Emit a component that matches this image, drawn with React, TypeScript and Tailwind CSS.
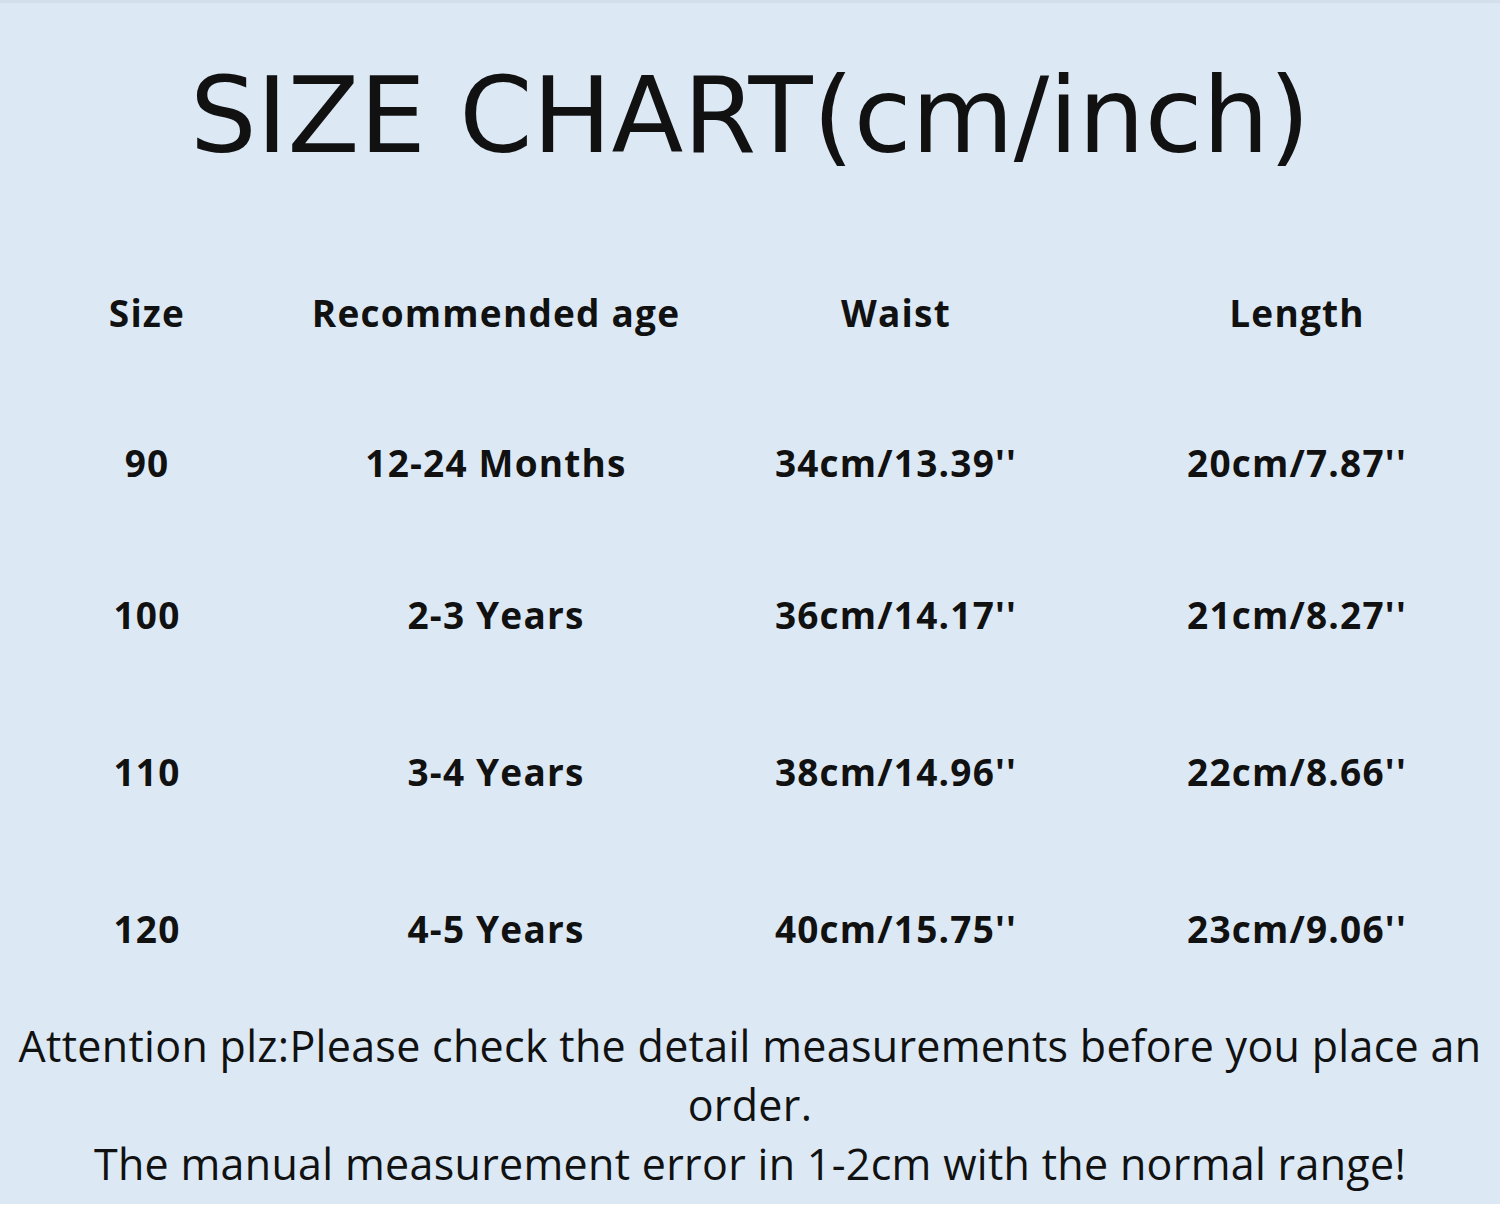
import React from "react";

const rows = [
  ["90", "12-24 Months", "34cm/13.39''", "20cm/7.87''"],
  ["100", "2-3 Years", "36cm/14.17''", "21cm/8.27''"],
  ["110", "3-4 Years", "38cm/14.96''", "22cm/8.66''"],
  ["120", "4-5 Years", "40cm/15.75''", "23cm/9.06''"],
];

const heights = ["h-[150px]", "h-[154px]", "h-[159px]", "h-[155px]"];

export default function App() {
  return (
    <div className="w-[1500px] h-[1208px] bg-white flex flex-col">
      <div className="h-[1204px] bg-[#dce9f5] border-t-[3px] border-[#d3dfeb] flex flex-col">
        <div
          className="h-[235px] flex items-start justify-center pt-[50px] text-[105px] leading-[1.2] text-[#111]"
          style={{ fontFamily: '"Comic Sans MS", "DejaVu Sans", sans-serif' }}
        >
          SIZE CHART(cm/inch)
        </div>
        <div
          className="flex flex-col text-[#111] font-bold text-[37px] tracking-[1.2px]"
          style={{ fontFamily: '"Open Sans", "Noto Sans", sans-serif' }}
        >
          <div className="grid grid-cols-[294px_404px_396px_406px] h-[150px] items-center text-center">
            <div>Size</div>
            <div>Recommended age</div>
            <div>Waist</div>
            <div>Length</div>
          </div>
          {rows.map((r, i) => (
            <div
              key={r[0]}
              className={`grid grid-cols-[294px_404px_396px_406px] items-center text-center ${heights[i]}`}
            >
              {r.map((c, j) => (
                <div key={j}>{c}</div>
              ))}
            </div>
          ))}
        </div>
        <div
          className="flex flex-col items-center text-center text-[43px] tracking-[0.3px] leading-[59px] text-[#111] mt-[10px]"
          style={{ fontFamily: '"Open Sans", "Noto Sans", sans-serif' }}
        >
          <div>Attention plz:Please check the detail measurements before you place an</div>
          <div>order.</div>
          <div>The manual measurement error in 1-2cm with the normal range!</div>
        </div>
      </div>
    </div>
  );
}
